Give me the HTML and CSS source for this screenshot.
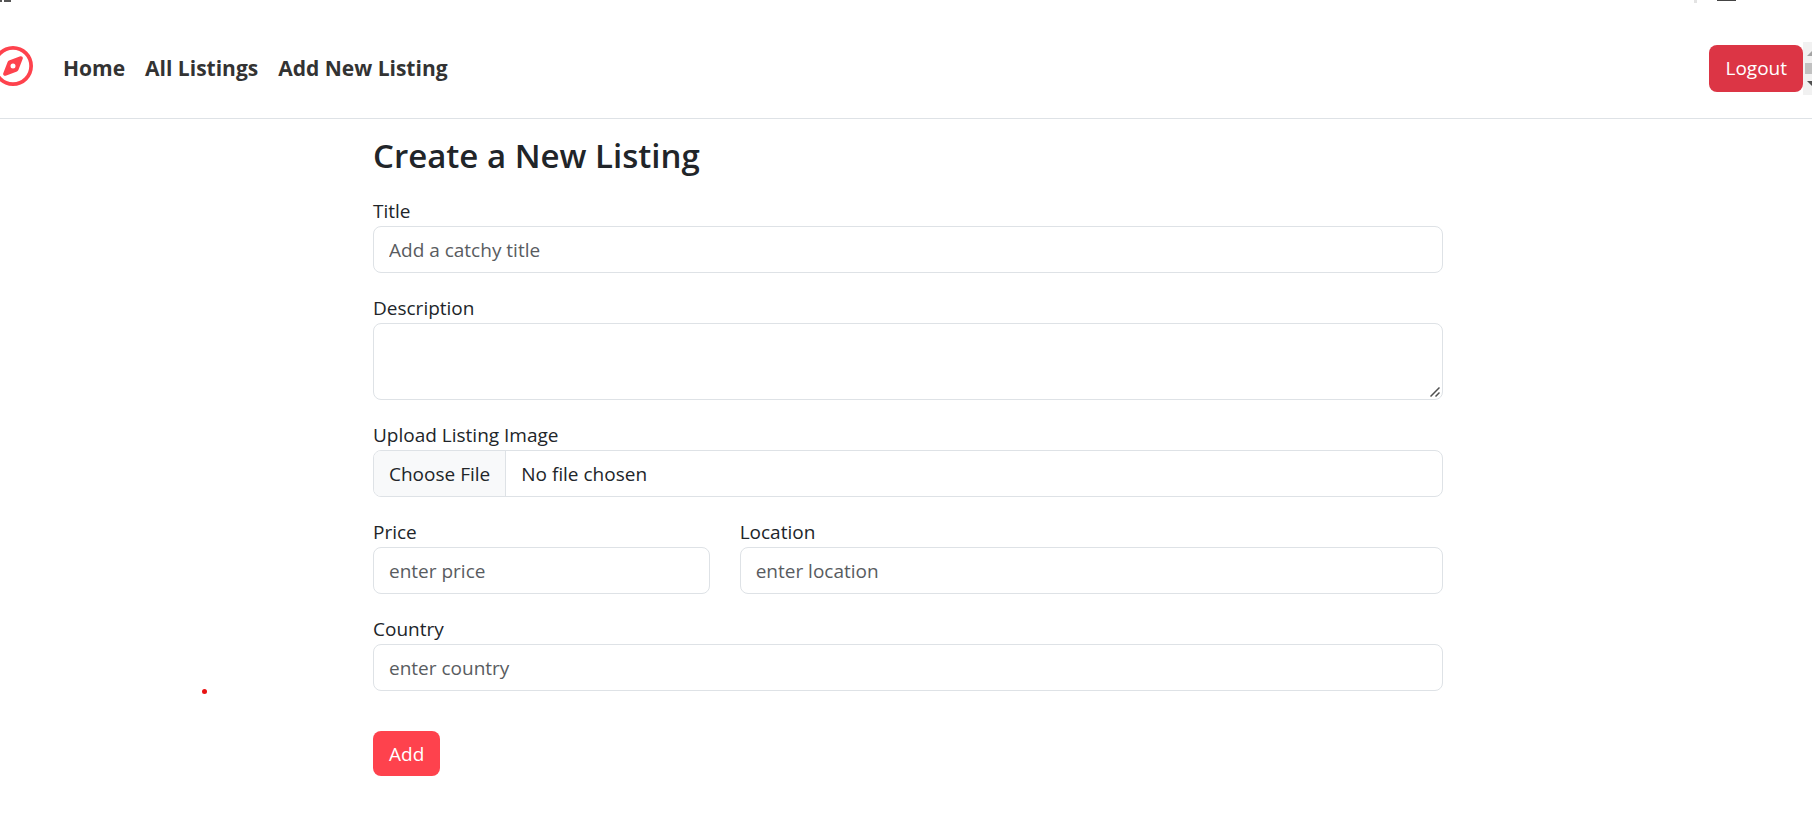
FILE: index.html
```html
<!DOCTYPE html>
<html lang="en">
<head>
<meta charset="utf-8">
<title>Create a New Listing</title>
<link rel="stylesheet" href="styles.css">
</head>
<body>
<div class="chrome" aria-hidden="true">
  <span class="chrome-text"></span>
  <span class="chrome-text-end"></span>
  <span class="chrome-divider"></span>
  <span class="chrome-minimize"></span>
</div>
<nav class="navbar">
  <a class="brand" href="#" aria-label="Listings">
    <svg viewBox="0 0 512 512" width="40" height="40" fill="currentColor"><path d="M464 256A208 208 0 1 0 48 256a208 208 0 1 0 416 0zM0 256a256 256 0 1 1 512 0A256 256 0 1 1 0 256zm306.700 69.100L162.400 380.600c-19.400 7.500-38.500-11.600-31-31l55.500-144.300c3.300-8.500 9.900-15.100 18.400-18.400l144.300-55.500c19.400-7.500 38.500 11.600 31 31L325.100 306.700c-3.200 8.500-9.900 15.100-18.400 18.400zM288 256a32 32 0 1 0 -64 0 32 32 0 1 0 64 0z"/></svg>
  </a>
  <div class="nav-links">
    <a href="#">Home</a>
    <a href="#">All Listings</a>
    <a href="#">Add New Listing</a>
  </div>
  <button class="btn logout" type="button">Logout</button>
  <svg class="scroller" viewBox="0 0 9 53" width="9" height="53" aria-hidden="true"><path fill="#f1f1f1" d="M0 0h9v53H0z"/><path fill="#a3a3a3" d="M4 14l5-5v5z"/><path fill="#c1c1c1" d="M2 21h7v11H2z"/><path fill="#505050" d="M4 39h5v5z"/></svg>
</nav>
<main class="page">
  <h1>Create a New Listing</h1>
  <form class="form">
    <div class="field">
      <label for="title">Title</label>
      <input class="control" id="title" type="text" placeholder="Add a catchy title">
    </div>
    <div class="field">
      <label for="description">Description</label>
      <div class="area-wrap">
        <textarea class="control area" id="description"></textarea>
        <svg class="grip" viewBox="0 0 10 10" width="10" height="10" aria-hidden="true"><path d="M.5 9.500l9-9M5.500 9.500l4-4" fill="none" stroke="#505050" stroke-width="1.500"/></svg>
      </div>
    </div>
    <div class="field">
      <label for="image">Upload Listing Image</label>
      <input class="control file" id="image" type="file">
    </div>
    <div class="field third">
      <label for="price">Price</label>
      <input class="control" id="price" type="text" placeholder="enter price">
    </div>
    <div class="field two-thirds">
      <label for="location">Location</label>
      <input class="control" id="location" type="text" placeholder="enter location">
    </div>
    <div class="field">
      <label for="country">Country</label>
      <input class="control" id="country" type="text" placeholder="enter country">
    </div>
    <button class="btn add" type="submit">Add</button>
  </form>
</main>
<span class="pointer-dot" aria-hidden="true"></span>
</body>
</html>
```

FILE: styles.css
```css
* {
  box-sizing: border-box;
}

body {
  margin: 0;
  background: #fff;
  color: #212529;
  font-family: "Segoe UI", "Open Sans", "Noto Sans", sans-serif;
  font-size: 19px;
  line-height: 30px;
  overflow-x: hidden;
}

.chrome span {
  position: absolute;
  top: 0;
}

.chrome-text {
  left: 0;
  width: 2px;
  height: 2px;
  background: #555;
}

.chrome-text-end {
  left: 4px;
  width: 7px;
  height: 2px;
  background: #555;
}

.chrome-divider {
  right: 115px;
  width: 3px;
  height: 3px;
  background: #e3e3e3;
}

.chrome-minimize {
  right: 76px;
  width: 19px;
  height: 1px;
  background: #444;
}

.navbar {
  display: flex;
  align-items: center;
  padding: 20px 0 2px;
  min-height: 119px;
  border-bottom: 1px solid #dee2e6;
}

.brand {
  display: flex;
  margin: 0 30px 4px -7px;
  color: #fe424d;
}

.nav-links {
  display: flex;
  flex: 1;
  gap: 20px;
}

.nav-links a {
  color: #333;
  font-size: 21px;
  font-weight: 700;
  text-decoration: none;
}

.btn {
  border: 0;
  border-radius: 8px;
  color: #fff;
  font: inherit;
  cursor: pointer;
}

.logout {
  height: 47px;
  padding: 0 16px;
  background: #dc3545;
}

.page {
  max-width: 1104px;
  margin: 0 auto;
  padding: 13px 15px 51px 19px;
}

h1 {
  margin: 0 0 16px;
  font-size: 33px;
  font-weight: 600;
  line-height: 48px;
}

.form {
  display: grid;
  grid-template-columns: repeat(12, 1fr);
  gap: 20px 30px;
}

.field {
  display: flex;
  flex-direction: column;
  grid-column: span 12;
}

.third {
  grid-column: span 4;
}

.two-thirds {
  grid-column: span 8;
}

.control {
  width: 100%;
  height: 47px;
  padding: 8px 15px;
  border: 1px solid #dee2e6;
  border-radius: 8px;
  background: #fff;
  color: #212529;
  font: inherit;
}

.control::placeholder {
  color: #595c5f;
  opacity: 1;
}

.area-wrap {
  display: flex;
  position: relative;
}

.area {
  height: 77px;
  resize: vertical;
}

.area::-webkit-resizer {
  background: transparent;
}

.grip {
  position: absolute;
  right: 3px;
  bottom: 3px;
  pointer-events: none;
}

.file {
  padding: 0;
  overflow: hidden;
  line-height: 46px;
}

.file::file-selector-button {
  height: 45px;
  margin: 0 15px 0 0;
  padding: 0 15px;
  border: 0;
  border-right: 1px solid #dee2e6;
  background: #f8f9fa;
  color: #212529;
  font: inherit;
}

.add {
  grid-column: span 12;
  justify-self: start;
  height: 45px;
  margin-top: 20px;
  padding: 0 16px;
  background: #fe424d;
}

.pointer-dot {
  position: absolute;
  top: 689px;
  left: 202px;
  width: 5px;
  height: 5px;
  border-radius: 50%;
  background: #e81313;
}
```
